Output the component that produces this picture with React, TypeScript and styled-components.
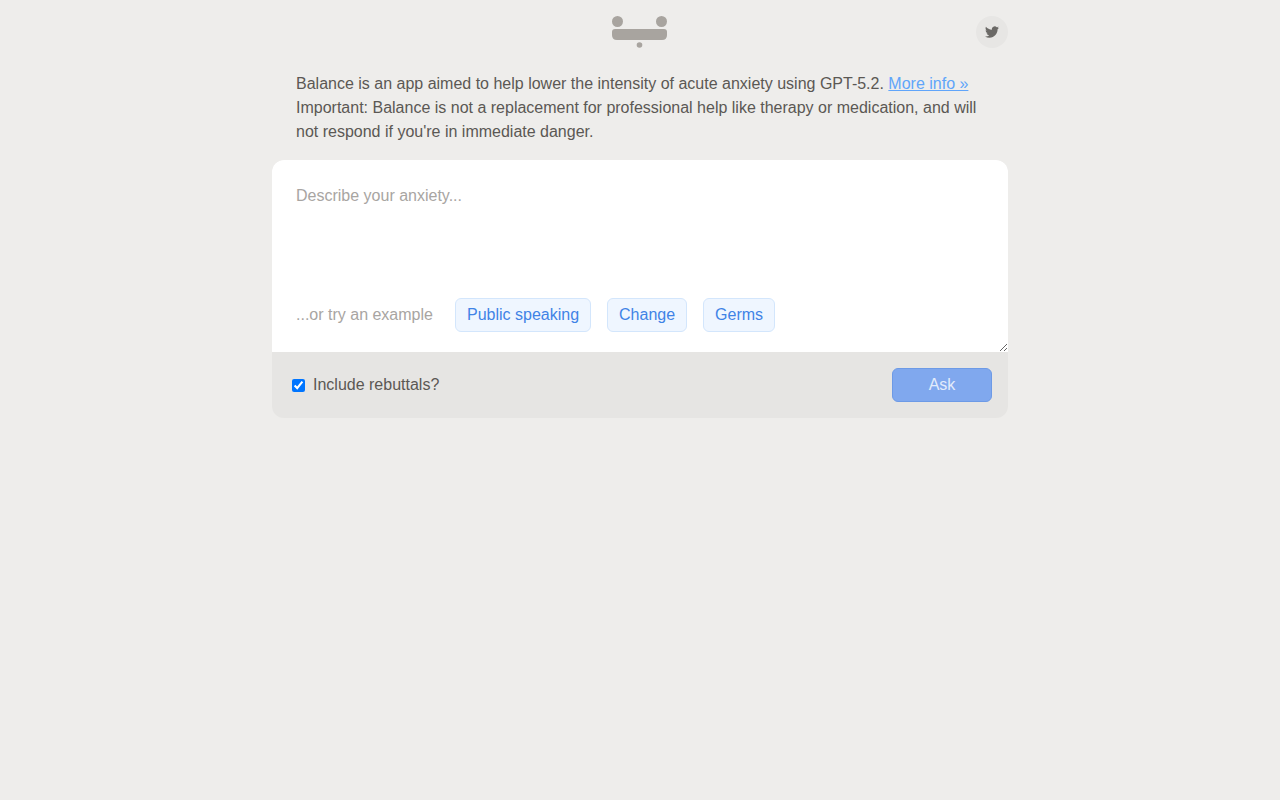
import React, { useState } from "react";
import styled, { createGlobalStyle } from "styled-components";

const GlobalStyle = createGlobalStyle`
  *, *::before, *::after { box-sizing: border-box; }
  body {
    margin: 0;
    background: #eeedeb;
    color: #5b5854;
    font-family: "Liberation Sans", Arial, sans-serif;
    font-size: 16px;
    line-height: 24px;
  }
  button, textarea, input { font: inherit; }
`;

const Page = styled.div`
  max-width: 768px;
  margin: 0 auto;
  padding: 16px;
`;

const Header = styled.header`
  display: grid;
  grid-template-columns: 1fr auto 1fr;
  align-items: center;
  height: 32px;
`;

const Logo = styled.svg`
  grid-column: 2;
  display: block;
  fill: #a8a49f;
`;

const SocialLink = styled.a`
  justify-self: end;
  display: flex;
  align-items: center;
  justify-content: center;
  width: 32px;
  height: 32px;
  border-radius: 50%;
  background: #e7e6e4;
  color: #6b6966;
`;

const Intro = styled.p`
  margin: 24px 0 16px;
  padding: 0 24px;
`;

const InfoLink = styled.a`
  color: #60a5fa;
  text-decoration: underline;
`;

const Card = styled.form`
  border-radius: 12px;
  overflow: hidden;
  background: #e6e5e3;
`;

const Prompt = styled.div`
  position: relative;
`;

const TextArea = styled.textarea`
  display: block;
  width: 100%;
  height: 192px;
  padding: 24px;
  border: 0;
  outline: none;
  resize: vertical;
  background: #fff;
  color: #5b5854;

  &::placeholder { color: #a8a5a2; }
`;

const Examples = styled.div`
  position: absolute;
  left: 24px;
  bottom: 20px;
  display: flex;
  align-items: center;
  gap: 16px;
  color: #a8a5a2;
`;

const ExamplesLabel = styled.span`
  margin-right: 6px;
`;

const Button = styled.button`
  height: 34px;
  padding: 0 11px;
  border: 1px solid;
  border-radius: 6px;
  cursor: pointer;
`;

const ExampleButton = styled(Button)`
  border-color: #d3e6fc;
  background: #eff6ff;
  color: #3f83e6;
`;

const AskButton = styled(Button)`
  width: 100px;
  border-color: #6d9ae6;
  background: #80a8ee;
  color: #e3ecfb;
  cursor: default;
`;

const Footer = styled.div`
  display: flex;
  align-items: center;
  justify-content: space-between;
  padding: 16px 16px 16px 20px;
`;

const CheckLabel = styled.label`
  display: flex;
  align-items: center;
  gap: 8px;
`;

const Checkbox = styled.input`
  width: 13px;
  height: 13px;
  margin: 0;
`;

const examples = [
  { label: "Public speaking", text: "I have to give a speech and I'm terrified." },
  { label: "Change", text: "I'm anxious about a big change in my life." },
  { label: "Germs", text: "I'm worried about germs on everything I touch." },
];

export default function App() {
  const [anxiety, setAnxiety] = useState("");
  const [rebuttals, setRebuttals] = useState(true);

  return (
    <>
      <GlobalStyle />
      <Page>
        <Header>
          <Logo width="56" height="32" viewBox="0 0 56 32" role="img" aria-label="Balance">
            <circle cx="5.5" cy="5.5" r="5.5" />
            <circle cx="49.5" cy="5.5" r="5.5" />
            <path d="M3 13H52Q55 13 55 16V19Q55 24 50 24H5Q0 24 0 19V16Q0 13 3 13Z" />
            <circle cx="27.5" cy="29" r="2.8" />
          </Logo>
          <SocialLink href="#twitter" aria-label="Twitter">
            <svg width="14" height="14" viewBox="0 0 24 24" fill="currentColor">
              <path d="M23.953 4.57a10 10 0 01-2.825.775 4.958 4.958 0 002.163-2.723c-.951.555-2.005.959-3.127 1.184a4.92 4.92 0 00-8.384 4.482C7.69 8.095 4.067 6.13 1.64 3.162a4.822 4.822 0 00-.666 2.475c0 1.71.87 3.213 2.188 4.096a4.904 4.904 0 01-2.228-.616v.06a4.923 4.923 0 003.946 4.827 4.996 4.996 0 01-2.212.085 4.936 4.936 0 004.604 3.417 9.867 9.867 0 01-6.102 2.105c-.39 0-.779-.023-1.17-.067a13.995 13.995 0 007.557 2.209c9.053 0 13.998-7.496 13.998-13.985 0-.21 0-.42-.015-.63A9.935 9.935 0 0024 4.59z" />
            </svg>
          </SocialLink>
        </Header>
        <Intro>
          Balance is an app aimed to help lower the intensity of acute anxiety using GPT-5.2.{" "}
          <InfoLink href="#info">More info »</InfoLink>
          <br />
          Important: Balance is not a replacement for professional help like therapy or
          medication, and will not respond if you're in immediate danger.
        </Intro>
        <Card onSubmit={(e) => e.preventDefault()}>
          <Prompt>
            <TextArea
              aria-label="Describe your anxiety"
              placeholder="Describe your anxiety..."
              value={anxiety}
              onChange={(e) => setAnxiety(e.target.value)}
            />
            {anxiety === "" && (
              <Examples>
                <ExamplesLabel>...or try an example</ExamplesLabel>
                {examples.map(({ label, text }) => (
                  <ExampleButton key={label} type="button" onClick={() => setAnxiety(text)}>
                    {label}
                  </ExampleButton>
                ))}
              </Examples>
            )}
          </Prompt>
          <Footer>
            <CheckLabel>
              <Checkbox
                type="checkbox"
                checked={rebuttals}
                onChange={(e) => setRebuttals(e.target.checked)}
              />
              Include rebuttals?
            </CheckLabel>
            <AskButton type="submit" disabled={anxiety === ""}>Ask</AskButton>
          </Footer>
        </Card>
      </Page>
    </>
  );
}
